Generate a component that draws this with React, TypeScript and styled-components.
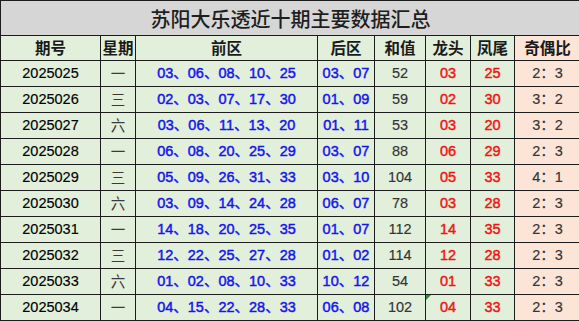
import React from 'react';
import styled, { createGlobalStyle } from 'styled-components';

const GlobalStyle = createGlobalStyle`
  html, body {
    margin: 0;
    padding: 0;
    background: #ffffff;
    overflow: hidden;
  }
`;

const GREEN = '#e2efda';
const PEACH = '#fce4d6';
const LINE = '#1c1c1c';

const Table = styled.table`
  width: 580px;
  table-layout: fixed;
  border-collapse: collapse;
  font-family: "Liberation Sans", "Noto Sans CJK SC", sans-serif;
`;

const TitleCell = styled.th`
  height: 34px;
  padding: 0;
  border: 1px solid ${LINE};
  background: #d6d6d6;
  color: #1e1e1e;
  font-family: "Noto Sans CJK SC", sans-serif;
  font-size: 20px;
  font-weight: 500;
  text-align: center;
`;

const HeadCell = styled.th<{ $peach?: boolean }>`
  height: 24px;
  padding: 0;
  border: 1px solid ${LINE};
  background: ${(p) => (p.$peach ? PEACH : GREEN)};
  color: #1a1a1a;
  font-family: "Noto Sans CJK SC", sans-serif;
  font-size: 15.5px;
  font-weight: 700;
  text-align: center;
  line-height: 1;
`;

const Row = styled.tr`
  height: 26px;
`;

const Cell = styled.td<{ $color?: string; $strong?: boolean; $peach?: boolean; $flag?: boolean }>`
  position: relative;
  padding: 0;
  border: 1px solid ${LINE};
  background: ${(p) => (p.$peach ? PEACH : GREEN)};
  color: ${(p) => p.$color || '#000'};
  font-size: 14.5px;
  font-weight: 400;
  -webkit-text-stroke: ${(p) => (p.$strong ? '0.45px' : '0.15px')} currentColor;
  text-align: center;
  white-space: nowrap;
  line-height: 1;

  &::before {
    content: '';
    display: ${(p) => (p.$flag ? 'block' : 'none')};
    position: absolute;
    left: 0;
    top: 0;
    border-top: 5px solid #2e8b2e;
    border-right: 5px solid transparent;
  }
`;

const Weekday = styled(Cell)`
  font-family: "Noto Sans CJK SC", sans-serif;
  color: #3a3a3a;
  -webkit-text-stroke: 0;
`;

const draws = [
  { no: '2025025', day: '一', front: '03、06、08、10、25', back: '03、07', sum: 52, head: '03', tail: '25', ratio: '2：3' },
  { no: '2025026', day: '三', front: '02、03、07、17、30', back: '01、09', sum: 59, head: '02', tail: '30', ratio: '3：2' },
  { no: '2025027', day: '六', front: '03、06、11、13、20', back: '01、11', sum: 53, head: '03', tail: '20', ratio: '3：2' },
  { no: '2025028', day: '一', front: '06、08、20、25、29', back: '03、07', sum: 88, head: '06', tail: '29', ratio: '2：3' },
  { no: '2025029', day: '三', front: '05、09、26、31、33', back: '03、10', sum: 104, head: '05', tail: '33', ratio: '4：1' },
  { no: '2025030', day: '六', front: '03、09、14、24、28', back: '06、07', sum: 78, head: '03', tail: '28', ratio: '2：3' },
  { no: '2025031', day: '一', front: '14、18、20、25、35', back: '01、07', sum: 112, head: '14', tail: '35', ratio: '2：3' },
  { no: '2025032', day: '三', front: '12、22、25、27、28', back: '01、02', sum: 114, head: '12', tail: '28', ratio: '2：3' },
  { no: '2025033', day: '六', front: '01、02、08、10、33', back: '10、12', sum: 54, head: '01', tail: '33', ratio: '2：3' },
  { no: '2025034', day: '一', front: '04、15、22、28、33', back: '06、08', sum: 102, head: '04', tail: '33', ratio: '2：3' },
];

const widths = [100, 35, 182, 57, 51, 45, 44, 66];

export default function App() {
  return (
    <>
      <GlobalStyle />
      <Table>
        <colgroup>
          {widths.map((w, i) => (
            <col key={i} style={{ width: w }} />
          ))}
        </colgroup>
        <thead>
          <tr>
            <TitleCell colSpan={8}>苏阳大乐透近十期主要数据汇总</TitleCell>
          </tr>
          <tr>
            <HeadCell>期号</HeadCell>
            <HeadCell>星期</HeadCell>
            <HeadCell>前区</HeadCell>
            <HeadCell>后区</HeadCell>
            <HeadCell>和值</HeadCell>
            <HeadCell>龙头</HeadCell>
            <HeadCell>凤尾</HeadCell>
            <HeadCell $peach>奇偶比</HeadCell>
          </tr>
        </thead>
        <tbody>
          {draws.map((d, i) => (
            <Row key={d.no}>
              <Cell>{d.no}</Cell>
              <Weekday>{d.day}</Weekday>
              <Cell $color="#1414f0" $strong>{d.front}</Cell>
              <Cell $color="#1414f0" $strong>{d.back}</Cell>
              <Cell $color="#333">{d.sum}</Cell>
              <Cell $color="#f01414" $strong $flag={i === draws.length - 1}>{d.head}</Cell>
              <Cell $color="#f01414" $strong>{d.tail}</Cell>
              <Cell $color="#333" $peach>{d.ratio}</Cell>
            </Row>
          ))}
        </tbody>
      </Table>
    </>
  );
}
